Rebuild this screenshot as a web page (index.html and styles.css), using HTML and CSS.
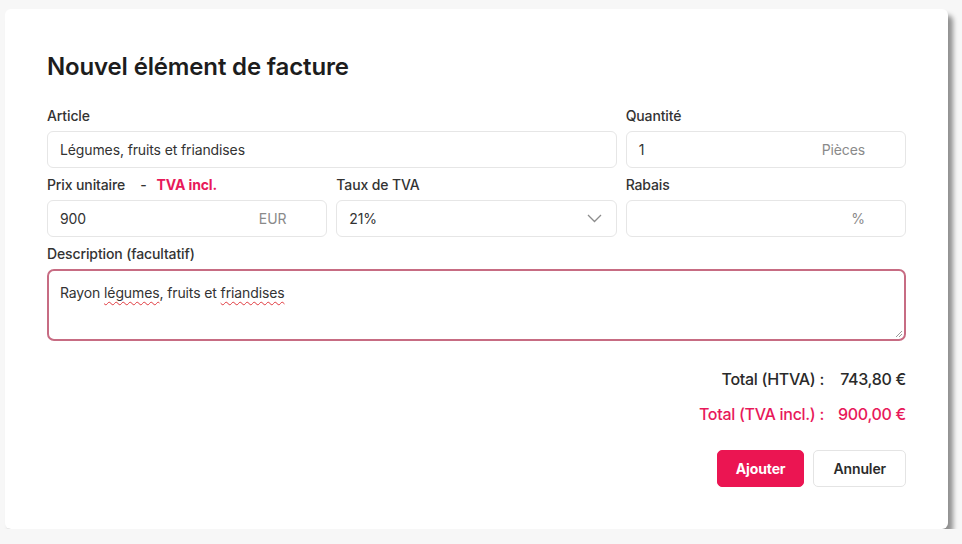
FILE: index.html
```html
<!DOCTYPE html>
<html lang="fr">
<head>
<meta charset="utf-8">
<title>Nouvel élément de facture</title>
<link rel="stylesheet" href="styles.css">
</head>
<body>
<div class="modal">
  <h1 class="title">Nouvel élément de facture</h1>
  <div class="form">
    <div class="field span2">
      <label class="label">Article</label>
      <div class="input"><span>Légumes, fruits et friandises</span></div>
    </div>
    <div class="field">
      <label class="label">Quantité</label>
      <div class="input"><span>1</span><span class="suffix">Pièces</span></div>
    </div>
    <div class="field">
      <label class="label">Prix unitaire<span class="dash">-</span><span class="incl">TVA incl.</span></label>
      <div class="input"><span>900</span><span class="suffix">EUR</span></div>
    </div>
    <div class="field">
      <label class="label">Taux de TVA</label>
      <div class="input select"><span>21%</span>
        <svg class="chevron" width="15" height="9" viewBox="0 0 15 9"><polyline points="1,1 7.5,7.5 14,1" fill="none" stroke="#8c8c8c" stroke-width="1.3"/></svg>
      </div>
    </div>
    <div class="field">
      <label class="label">Rabais</label>
      <div class="input"><span></span><span class="suffix">%</span></div>
    </div>
    <div class="field span3">
      <label class="label">Description (facultatif)</label>
      <div class="textarea">Rayon <span class="spell">légumes</span>, fruits et <span class="spell">friandises</span>
        <svg class="grip" width="8" height="8" viewBox="0 0 8 8"><line x1="7" y1="1" x2="1" y2="7" stroke="#9a9a9a" stroke-width="1"/><line x1="7" y1="4" x2="4" y2="7" stroke="#9a9a9a" stroke-width="1"/></svg>
      </div>
    </div>
  </div>
  <div class="totals">
    <span class="tlabel">Total (HTVA) :</span><span class="tvalue">743,80 €</span>
    <span class="tlabel pink">Total (TVA incl.) :</span><span class="tvalue pink">900,00 €</span>
  </div>
  <div class="actions">
    <button class="btn primary">Ajouter</button>
    <button class="btn secondary">Annuler</button>
  </div>
</div>
</body>
</html>
```
FILE: styles.css
```css
html, body {
  margin: 0;
  padding: 0;
}
body {
  background: #f7f7f7;
  padding: 9px 0 0 5px;
  font-family: Inter, "Noto Sans", sans-serif;
  color: #333;
  letter-spacing: -0.12px;
}
.modal {
  box-sizing: border-box;
  width: 943px;
  height: 520px;
  background: #fff;
  border-radius: 6px;
  box-shadow: 5px 6px 5px rgba(0, 0, 0, 0.42);
  padding: 42px 42px 42px 42px;
}
.title {
  margin: 0;
  font-size: 24px;
  line-height: 32px;
  font-weight: 600;
  color: #1d1d1d;
  letter-spacing: -0.15px;
}
.form {
  margin-top: 23px;
  display: grid;
  grid-template-columns: repeat(3, 1fr);
  column-gap: 9px;
  row-gap: 7px;
}
.field {
  display: flex;
  flex-direction: column;
  gap: 5px;
}
.span2 { grid-column: span 2; }
.span3 { grid-column: span 3; }
.label {
  font-size: 14px;
  line-height: 20px;
  font-weight: 500;
  color: #333;
}
.dash {
  margin: 0 10px 0 15px;
}
.incl {
  color: #e8195a;
  font-weight: 700;
}
.input {
  box-sizing: border-box;
  height: 37px;
  border: 1px solid #e6e6e6;
  border-radius: 6px;
  display: flex;
  align-items: center;
  justify-content: space-between;
  padding: 0 40px 0 12px;
  font-size: 14px;
  color: #333;
}
.input.select {
  padding-right: 14px;
}
.suffix {
  color: #8a8a8a;
}
.chevron {
  display: block;
}
.textarea {
  position: relative;
  box-sizing: border-box;
  height: 72px;
  border: 2px solid #c76c83;
  border-radius: 7px;
  padding: 12px 11px;
  font-size: 14px;
  line-height: 20px;
  color: #333;
}
.spell {
  text-decoration: underline wavy #e0393e;
  text-decoration-thickness: 1px;
  text-underline-offset: 3px;
}
.grip {
  position: absolute;
  right: 1px;
  bottom: 1px;
}
.totals {
  margin-top: 26px;
  display: grid;
  grid-template-columns: auto auto;
  justify-content: end;
  column-gap: 14px;
  row-gap: 10.5px;
  font-size: 16px;
  line-height: 24px;
  font-weight: 500;
  letter-spacing: -0.3px;
  color: #2a2a2a;
}
.tlabel, .tvalue {
  justify-self: end;
}
.pink {
  color: #e8195a;
}
.actions {
  margin-top: 24px;
  display: flex;
  justify-content: flex-end;
  gap: 9px;
}
.btn {
  box-sizing: border-box;
  height: 37px;
  border-radius: 5px;
  font-family: Inter, "Noto Sans", sans-serif;
  font-size: 14px;
  letter-spacing: -0.12px;
  cursor: pointer;
}
.primary {
  background: #eb1552;
  border: 1px solid #eb1552;
  color: #fff;
  font-weight: 700;
  padding: 0 18px;
}
.secondary {
  background: #fff;
  border: 1px solid #e4e4e4;
  color: #2b2b2b;
  font-weight: 600;
  padding: 0 19px;
}
```
